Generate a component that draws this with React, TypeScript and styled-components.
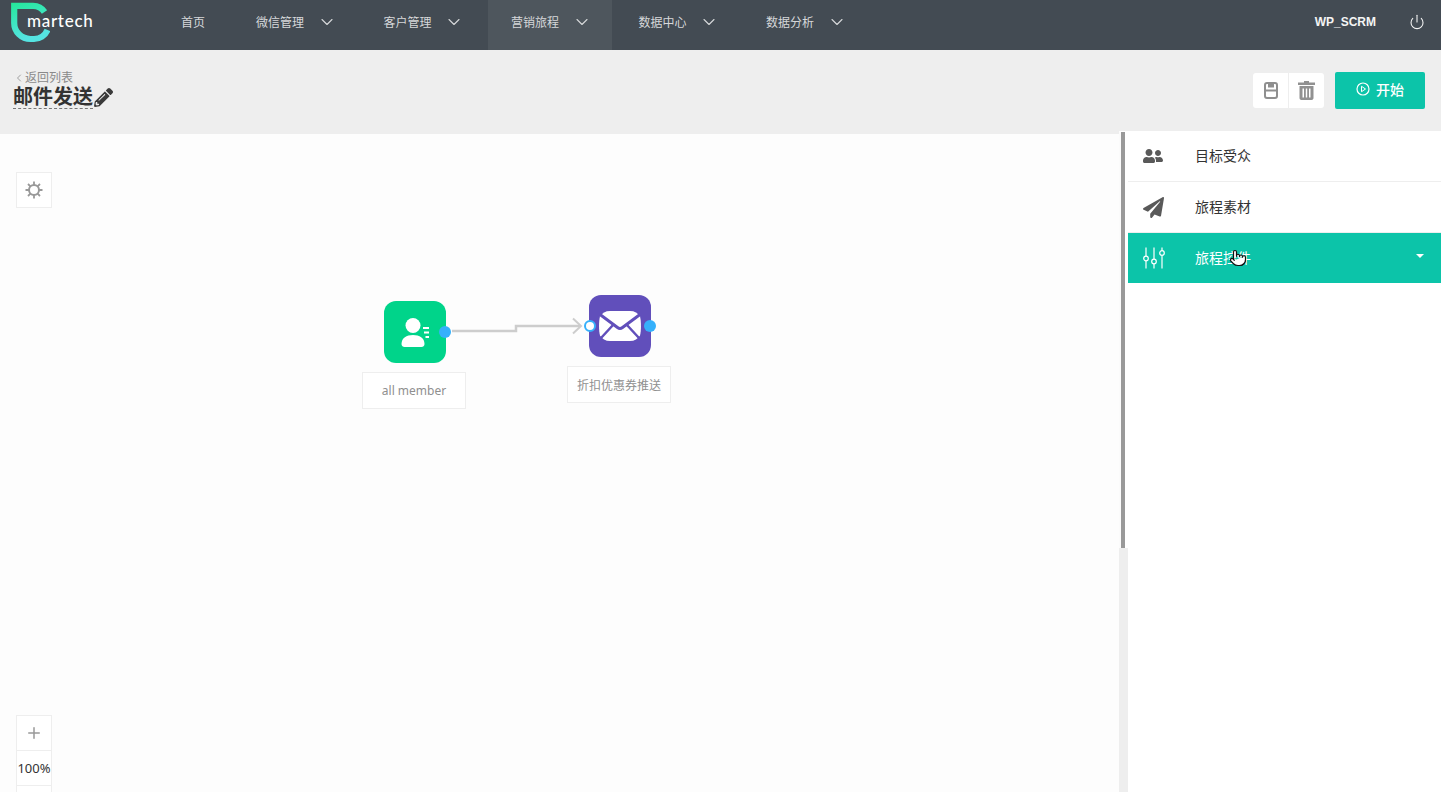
import { ReactNode } from "react";
import styled, { createGlobalStyle } from "styled-components";
import { ChevronDown, ChevronLeft, Plus, Pointer, Power } from "lucide-react";
import { FaPaperPlane, FaPencilAlt, FaUserFriends } from "react-icons/fa";

const menus = [
  { label: "微信管理" },
  { label: "客户管理" },
  { label: "营销旅程", active: true },
  { label: "数据中心" },
  { label: "数据分析" },
];

function LogoMark() {
  return (
    <svg width="50" height="44" viewBox="0 0 50 44" fill="none">
      <defs>
        <linearGradient id="logoFill" x1="0" y1="0" x2="0.3" y2="1">
          <stop offset="0" stopColor="#25e89b" />
          <stop offset="1" stopColor="#55e4e2" />
        </linearGradient>
      </defs>
      <path
        d="M14.200 5.800H33C38 5.800 42 8 44.500 12M47.500 30C45 36 39.500 39 34 39H30.500C21.500 39 14.200 31.800 14.200 23V2.700"
        stroke="url(#logoFill)"
        strokeWidth="6.200"
      />
    </svg>
  );
}

function SaveIcon() {
  return (
    <svg width="14" height="17" viewBox="0 0 14 17" fill="none">
      <rect x="1" y="1" width="12" height="15" rx="2" stroke="#8f8f8f" strokeWidth="2" />
      <path d="M1 8.500H13" stroke="#8f8f8f" strokeWidth="2" />
      <rect x="4" y="1" width="6" height="4.500" fill="#8f8f8f" />
    </svg>
  );
}

function TrashIcon() {
  return (
    <svg width="17" height="19" viewBox="0 0 17 19" fill="#919191">
      <path d="M6 0H11V1.500H17V4H0V1.500H6V0Z" />
      <path
        d="M1.500 5H15.500V17C15.500 18.200 14.700 19 13.500 19H3.500C2.300 19 1.500 18.200 1.500 17V5ZM4.500 7.500V16.500H6V7.500H4.500ZM7.800 7.500V16.500H9.200V7.500H7.800ZM11 7.500V16.500H12.500V7.500H11Z"
        fillRule="evenodd"
      />
    </svg>
  );
}

function PlayCircle() {
  return (
    <svg width="14" height="14" viewBox="0 0 14 14" fill="none">
      <circle cx="7" cy="7" r="6" stroke="#fff" strokeWidth="1.200" />
      <path d="M5.500 4.300L9.500 7L5.500 9.700Z" stroke="#fff" strokeWidth="1" strokeLinejoin="round" />
    </svg>
  );
}

function GearIcon() {
  return (
    <svg width="18" height="18" viewBox="0 0 18 18" fill="none" stroke="#999">
      <circle cx="9" cy="9" r="5" strokeWidth="2" />
      <path
        d="M9 0.500V4M9 14V17.500M0.500 9H4M14 9H17.500M3 3L5.400 5.400M12.600 12.600L15 15M15 3L12.600 5.400M5.400 12.600L3 15"
        strokeWidth="1.800"
      />
    </svg>
  );
}

function SlidersIcon() {
  return (
    <svg width="22" height="22" viewBox="0 0 22 22" fill="none" stroke="#fff" strokeWidth="1.200">
      <path d="M3 0.500V9M3 14V21.500M11 0.500V12M11 17V21.500M19 0.500V3.500M19 8.500V21.500" />
      <circle cx="3" cy="11.500" r="2.300" />
      <circle cx="11" cy="14.500" r="2.300" />
      <circle cx="19" cy="6" r="2.300" />
    </svg>
  );
}

function AudienceGlyph() {
  return (
    <svg width="32" height="32" viewBox="0 0 32 32" fill="#fff">
      <circle cx="14" cy="9.500" r="7.500" />
      <path d="M2.500 28C2.500 22 7.500 19 14 19C20.500 19 25.500 22 25.500 28C25.500 30 24 31 22.500 31H5.500C4 31 2.500 30 2.500 28Z" />
      <path d="M24 11H30V13H24ZM25 15.500H30V17.500H25ZM26.500 20H30V22H26.500Z" />
    </svg>
  );
}

function MailGlyph() {
  return (
    <svg width="42" height="30" viewBox="0 0 42 30" fill="none">
      <path
        d="M11 0H31C35.500 0 39 2 41 5.500C42.300 10 42.300 20 41 24.500C39 28 35.500 30 31 30H11C6.500 30 3 28 1 24.500C-0.300 20 -0.300 10 1 5.500C3 2 6.500 0 11 0Z"
        fill="#fff"
      />
      <path d="M1 3.500L18.500 16.500C20 17.600 22 17.600 23.500 16.500L41 3.500" stroke="#614fbb" strokeWidth="3" />
      <path d="M14.500 13.500L2 27M27.500 13.500L40 27" stroke="#614fbb" strokeWidth="2.500" />
    </svg>
  );
}

function Connector() {
  return (
    <LinkLine width="140" height="30" viewBox="0 0 140 30" fill="none">
      <path d="M2 16H66V11H130" stroke="#cdcdcd" strokeWidth="2.500" />
      <path d="M123 3.500L131 11L123 18.500" stroke="#cdcdcd" strokeWidth="2" />
    </LinkLine>
  );
}

function SideRow({ icon, label, active }: { icon: ReactNode; label: string; active?: boolean }) {
  return (
    <Row $active={active}>
      <RowIcon>{icon}</RowIcon>
      <RowLabel>{label}</RowLabel>
      {active && <Caret />}
    </Row>
  );
}

export default function App() {
  return (
    <Page>
      <GlobalStyle />
      <TopBar>
        <Logo>
          <LogoMark />
          <LogoText>martech</LogoText>
        </Logo>
        <MenuList>
          <HomeItem>首页</HomeItem>
          {menus.map((menu) => (
            <MenuItem key={menu.label} $active={menu.active}>
              {menu.label}
              <ChevronDown size={20} strokeWidth={1.3} />
            </MenuItem>
          ))}
        </MenuList>
        <UserArea>
          <UserName>WP_SCRM</UserName>
          <Power size={16} strokeWidth={1.6} />
        </UserArea>
      </TopBar>

      <SubHeader>
        <TitleBlock>
          <BackLink>
            <ChevronLeft size={12} strokeWidth={1.6} />
            返回列表
          </BackLink>
          <TitleRow>
            <Title>邮件发送</Title>
            <FaPencilAlt size={19} color="#3a3a3a" />
          </TitleRow>
        </TitleBlock>
        <Actions>
          <IconGroup>
            <IconCell>
              <SaveIcon />
            </IconCell>
            <IconCell>
              <TrashIcon />
            </IconCell>
          </IconGroup>
          <StartButton>
            <PlayCircle />
            开始
          </StartButton>
        </Actions>
      </SubHeader>

      <Main>
        <Canvas>
          <GearButton>
            <GearIcon />
          </GearButton>

          <FlowNode $x={362} $y={167}>
            <NodeTile $color="#00d48a">
              <AudienceGlyph />
              <Port $side="right" />
            </NodeTile>
            <NodeLabel>all member</NodeLabel>
          </FlowNode>

          <Connector />

          <FlowNode $x={567} $y={161}>
            <NodeTile $color="#614fbb">
              <MailGlyph />
              <Port $side="left" $hollow />
              <Port $side="right" />
            </NodeTile>
            <NodeLabel>折扣优惠券推送</NodeLabel>
          </FlowNode>

          <ZoomBox>
            <ZoomCell>
              <Plus size={18} color="#999" strokeWidth={2} />
            </ZoomCell>
            <ZoomCell>100%</ZoomCell>
            <ZoomCell />
          </ZoomBox>
        </Canvas>

        <ScrollTrack>
          <ScrollThumb />
        </ScrollTrack>

        <Sidebar>
          <SideRow icon={<FaUserFriends size={20} />} label="目标受众" />
          <SideRow icon={<FaPaperPlane size={21} />} label="旅程素材" />
          <SideRow icon={<SlidersIcon />} label="旅程控件" active />
          <HandCursor>
            <Pointer size={18} color="#111" fill="#fff" strokeWidth={1.6} />
          </HandCursor>
        </Sidebar>
      </Main>
    </Page>
  );
}

const GlobalStyle = createGlobalStyle`
  html, body {
    margin: 0;
    padding: 0;
  }

  body {
    font-family: "Liberation Sans", "Noto Sans CJK SC", sans-serif;
    overflow: hidden;
  }
`;

const Page = styled.div`
  width: 1441px;
  height: 792px;
  display: flex;
  flex-direction: column;
  overflow: hidden;
  background-color: #eeeeee;
`;

const TopBar = styled.header`
  height: 50px;
  flex-shrink: 0;
  display: flex;
  align-items: stretch;
  background-color: #434b53;
  color: #d6d8da;
  font-size: 12px;
`;

const Logo = styled.div`
  width: 157px;
  position: relative;
  flex-shrink: 0;
  overflow: hidden;

  svg {
    display: block;
  }
`;

const LogoText = styled.span`
  position: absolute;
  left: 27px;
  top: 10px;
  font-family: Lato, sans-serif;
  font-size: 17px;
  font-weight: 500;
  letter-spacing: 0.7px;
  color: #ffffff;
`;

const MenuList = styled.nav`
  display: flex;
  align-items: stretch;
  flex: 1;
`;

const HomeItem = styled.div`
  width: 76px;
  padding: 0 0 7px 24px;
  box-sizing: border-box;
  display: flex;
  align-items: center;
`;

const MenuItem = styled.div<{ $active?: boolean }>`
  width: 124px;
  margin-right: 3.5px;
  padding: 0 0 7px 23px;
  box-sizing: border-box;
  display: flex;
  align-items: center;
  gap: 12.5px;
  background-color: ${(p) => (p.$active ? "#4e565d" : "transparent")};
`;

const UserArea = styled.div`
  display: flex;
  align-items: center;
  gap: 33px;
  padding: 0 16px 6px 0;
  color: #f4f4f4;
`;

const UserName = styled.span`
  font-size: 12px;
  font-weight: 700;
`;

const SubHeader = styled.div`
  height: 81px;
  flex-shrink: 0;
  display: flex;
  justify-content: space-between;
  align-items: flex-start;
  padding: 0 16px 0 13px;
`;

const TitleBlock = styled.div`
  padding-top: 20px;
`;

const BackLink = styled.div`
  display: flex;
  align-items: center;
  font-size: 12px;
  line-height: 16px;
  color: #8a8a8a;
`;

const TitleRow = styled.div`
  display: flex;
  align-items: center;
  gap: 1px;
`;

const Title = styled.h1`
  margin: 0;
  font-size: 20px;
  line-height: 22px;
  font-weight: 700;
  color: #333333;
  border-bottom: 1px dashed #777777;
`;

const Actions = styled.div`
  display: flex;
  align-items: flex-start;
  gap: 11px;
  padding-top: 22px;
`;

const IconGroup = styled.div`
  display: flex;
  margin-top: 1px;
  border-radius: 3px;
  overflow: hidden;
  background-color: #ffffff;
`;

const IconCell = styled.div`
  width: 35px;
  height: 35px;
  display: flex;
  align-items: center;
  justify-content: center;

  & + & {
    border-left: 1px solid #eeeeee;
  }
`;

const StartButton = styled.button`
  width: 90px;
  height: 37px;
  display: flex;
  align-items: center;
  justify-content: center;
  gap: 6px;
  border: none;
  border-radius: 2px;
  padding: 0 0 3px;
  background-color: #0cc4a9;
  color: #ffffff;
  font-family: inherit;
  font-size: 14px;
  font-weight: 500;
`;

const Main = styled.main`
  flex: 1;
  display: flex;
  min-height: 0;
`;

const Canvas = styled.section`
  width: 1119px;
  margin-top: 3px;
  position: relative;
  overflow: hidden;
  background-color: #fdfdfd;
`;

const GearButton = styled.div`
  position: absolute;
  left: 16px;
  top: 38px;
  width: 36px;
  height: 36px;
  box-sizing: border-box;
  display: flex;
  align-items: center;
  justify-content: center;
  border: 1px solid #eeeeee;
  background-color: #ffffff;
`;

const FlowNode = styled.div<{ $x: number; $y: number }>`
  position: absolute;
  left: ${(p) => p.$x}px;
  top: ${(p) => p.$y}px;
  width: 104px;
  display: flex;
  flex-direction: column;
  align-items: center;
  gap: 9px;
`;

const NodeTile = styled.div<{ $color: string }>`
  position: relative;
  left: 1px;
  width: 62px;
  height: 62px;
  display: flex;
  align-items: center;
  justify-content: center;
  border-radius: 12px;
  background-color: ${(p) => p.$color};
`;

const Port = styled.span<{ $side: "left" | "right"; $hollow?: boolean }>`
  position: absolute;
  top: 25px;
  ${(p) => (p.$side === "left" ? "left: -5px;" : "right: -5px;")}
  width: 12px;
  height: 12px;
  box-sizing: border-box;
  border-radius: 50%;
  border: ${(p) => (p.$hollow ? "2px solid #35b0fb" : "none")};
  background-color: ${(p) => (p.$hollow ? "#ffffff" : "#35b0fb")};
`;

const NodeLabel = styled.div`
  width: 100%;
  height: 37px;
  box-sizing: border-box;
  display: flex;
  align-items: center;
  justify-content: center;
  border: 1px solid #eeeeee;
  background-color: #ffffff;
  font-family: "Noto Sans", "Noto Sans CJK SC", sans-serif;
  font-size: 12px;
  color: #8f8f8f;
`;

const LinkLine = styled.svg`
  position: absolute;
  left: 450px;
  top: 181px;
`;

const ZoomBox = styled.div`
  position: absolute;
  left: 16px;
  top: 581px;
  width: 36px;
  box-sizing: border-box;
  border: 1px solid #eeeeee;
  background-color: #ffffff;
`;

const ZoomCell = styled.div`
  height: 34px;
  display: flex;
  align-items: center;
  justify-content: center;
  font-family: "Noto Sans", sans-serif;
  font-size: 13px;
  color: #333333;

  & + & {
    border-top: 1px solid #eeeeee;
  }
`;

const ScrollTrack = styled.div`
  width: 9px;
  flex-shrink: 0;
  display: flex;
  flex-direction: column;
  align-items: flex-start;
  background-color: #eeeeee;
`;

const ScrollThumb = styled.div`
  width: 100%;
  height: 417px;
  box-sizing: border-box;
  border-top: 1px solid #ffffff;
  border-left: 2px solid #fbfbfb;
  border-right: 3px solid #ffffff;
  background-color: #999999;
`;

const Sidebar = styled.aside`
  flex: 1;
  position: relative;
  background-color: #ffffff;
`;

const Row = styled.div<{ $active?: boolean }>`
  height: 50px;
  display: flex;
  align-items: center;
  padding: 0 17px 0 15px;
  border-bottom: 1px solid ${(p) => (p.$active ? "#ffffff" : "#eeeeee")};
  background-color: ${(p) => (p.$active ? "#0cc4a9" : "#ffffff")};
  color: ${(p) => (p.$active ? "#ffffff" : "#333333")};

  svg {
    color: ${(p) => (p.$active ? "#ffffff" : "#595959")};
  }
`;

const RowIcon = styled.div`
  width: 52px;
  display: flex;
  align-items: center;
`;

const RowLabel = styled.span`
  flex: 1;
  font-size: 14px;
  padding-bottom: 2px;
`;

const Caret = styled.span`
  width: 0;
  height: 0;
  border-left: 4px solid transparent;
  border-right: 4px solid transparent;
  border-top: 4px solid #ffffff;
  margin-bottom: 5px;
`;

const HandCursor = styled.div`
  position: absolute;
  left: 101px;
  top: 118px;
`;
